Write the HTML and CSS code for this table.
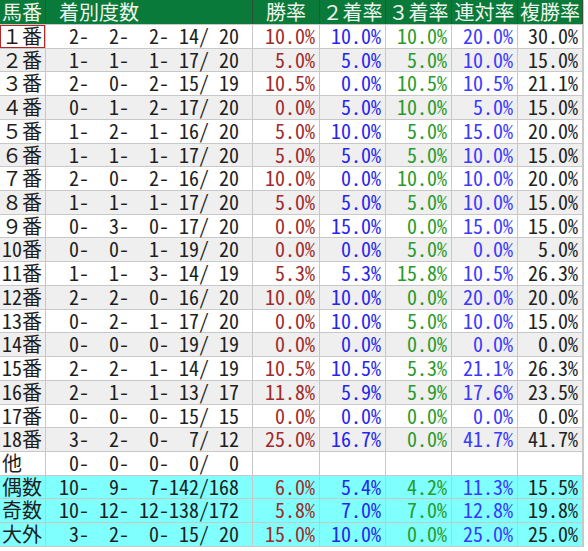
FILE: index.html
```html
<!DOCTYPE html>
<html lang="ja">
<head>
<meta charset="utf-8">
<title>馬番別成績</title>
<link rel="stylesheet" href="styles.css">
</head>
<body>
<div class="sheet">
  <div class="row head">
    <div class="cell lbl">馬番</div>
    <div class="cell cnt-h"> 着別度数</div>
    <div class="cell ctr">勝率</div>
    <div class="cell ctr">２着率</div>
    <div class="cell ctr">３着率</div>
    <div class="cell ctr">連対率</div>
    <div class="cell ctr">複勝率</div>
  </div>
  <div class="row"><div class="cell lbl sel">１番</div><div class="cell cnt">  2-  2-  2- 14/ 20</div><div class="cell pct win">10.0%</div><div class="cell pct p2">10.0%</div><div class="cell pct p3">10.0%</div><div class="cell pct ren">20.0%</div><div class="cell pct fuku">30.0%</div></div>
  <div class="row alt"><div class="cell lbl">２番</div><div class="cell cnt">  1-  1-  1- 17/ 20</div><div class="cell pct win">5.0%</div><div class="cell pct p2">5.0%</div><div class="cell pct p3">5.0%</div><div class="cell pct ren">10.0%</div><div class="cell pct fuku">15.0%</div></div>
  <div class="row"><div class="cell lbl">３番</div><div class="cell cnt">  2-  0-  2- 15/ 19</div><div class="cell pct win">10.5%</div><div class="cell pct p2">0.0%</div><div class="cell pct p3">10.5%</div><div class="cell pct ren">10.5%</div><div class="cell pct fuku">21.1%</div></div>
  <div class="row alt"><div class="cell lbl">４番</div><div class="cell cnt">  0-  1-  2- 17/ 20</div><div class="cell pct win">0.0%</div><div class="cell pct p2">5.0%</div><div class="cell pct p3">10.0%</div><div class="cell pct ren">5.0%</div><div class="cell pct fuku">15.0%</div></div>
  <div class="row"><div class="cell lbl">５番</div><div class="cell cnt">  1-  2-  1- 16/ 20</div><div class="cell pct win">5.0%</div><div class="cell pct p2">10.0%</div><div class="cell pct p3">5.0%</div><div class="cell pct ren">15.0%</div><div class="cell pct fuku">20.0%</div></div>
  <div class="row alt"><div class="cell lbl">６番</div><div class="cell cnt">  1-  1-  1- 17/ 20</div><div class="cell pct win">5.0%</div><div class="cell pct p2">5.0%</div><div class="cell pct p3">5.0%</div><div class="cell pct ren">10.0%</div><div class="cell pct fuku">15.0%</div></div>
  <div class="row"><div class="cell lbl">７番</div><div class="cell cnt">  2-  0-  2- 16/ 20</div><div class="cell pct win">10.0%</div><div class="cell pct p2">0.0%</div><div class="cell pct p3">10.0%</div><div class="cell pct ren">10.0%</div><div class="cell pct fuku">20.0%</div></div>
  <div class="row alt"><div class="cell lbl">８番</div><div class="cell cnt">  1-  1-  1- 17/ 20</div><div class="cell pct win">5.0%</div><div class="cell pct p2">5.0%</div><div class="cell pct p3">5.0%</div><div class="cell pct ren">10.0%</div><div class="cell pct fuku">15.0%</div></div>
  <div class="row"><div class="cell lbl">９番</div><div class="cell cnt">  0-  3-  0- 17/ 20</div><div class="cell pct win">0.0%</div><div class="cell pct p2">15.0%</div><div class="cell pct p3">0.0%</div><div class="cell pct ren">15.0%</div><div class="cell pct fuku">15.0%</div></div>
  <div class="row alt"><div class="cell lbl">10番</div><div class="cell cnt">  0-  0-  1- 19/ 20</div><div class="cell pct win">0.0%</div><div class="cell pct p2">0.0%</div><div class="cell pct p3">5.0%</div><div class="cell pct ren">0.0%</div><div class="cell pct fuku">5.0%</div></div>
  <div class="row"><div class="cell lbl">11番</div><div class="cell cnt">  1-  1-  3- 14/ 19</div><div class="cell pct win">5.3%</div><div class="cell pct p2">5.3%</div><div class="cell pct p3">15.8%</div><div class="cell pct ren">10.5%</div><div class="cell pct fuku">26.3%</div></div>
  <div class="row alt"><div class="cell lbl">12番</div><div class="cell cnt">  2-  2-  0- 16/ 20</div><div class="cell pct win">10.0%</div><div class="cell pct p2">10.0%</div><div class="cell pct p3">0.0%</div><div class="cell pct ren">20.0%</div><div class="cell pct fuku">20.0%</div></div>
  <div class="row"><div class="cell lbl">13番</div><div class="cell cnt">  0-  2-  1- 17/ 20</div><div class="cell pct win">0.0%</div><div class="cell pct p2">10.0%</div><div class="cell pct p3">5.0%</div><div class="cell pct ren">10.0%</div><div class="cell pct fuku">15.0%</div></div>
  <div class="row alt"><div class="cell lbl">14番</div><div class="cell cnt">  0-  0-  0- 19/ 19</div><div class="cell pct win">0.0%</div><div class="cell pct p2">0.0%</div><div class="cell pct p3">0.0%</div><div class="cell pct ren">0.0%</div><div class="cell pct fuku">0.0%</div></div>
  <div class="row"><div class="cell lbl">15番</div><div class="cell cnt">  2-  2-  1- 14/ 19</div><div class="cell pct win">10.5%</div><div class="cell pct p2">10.5%</div><div class="cell pct p3">5.3%</div><div class="cell pct ren">21.1%</div><div class="cell pct fuku">26.3%</div></div>
  <div class="row alt"><div class="cell lbl">16番</div><div class="cell cnt">  2-  1-  1- 13/ 17</div><div class="cell pct win">11.8%</div><div class="cell pct p2">5.9%</div><div class="cell pct p3">5.9%</div><div class="cell pct ren">17.6%</div><div class="cell pct fuku">23.5%</div></div>
  <div class="row"><div class="cell lbl">17番</div><div class="cell cnt">  0-  0-  0- 15/ 15</div><div class="cell pct win">0.0%</div><div class="cell pct p2">0.0%</div><div class="cell pct p3">0.0%</div><div class="cell pct ren">0.0%</div><div class="cell pct fuku">0.0%</div></div>
  <div class="row alt"><div class="cell lbl">18番</div><div class="cell cnt">  3-  2-  0-  7/ 12</div><div class="cell pct win">25.0%</div><div class="cell pct p2">16.7%</div><div class="cell pct p3">0.0%</div><div class="cell pct ren">41.7%</div><div class="cell pct fuku">41.7%</div></div>
  <div class="row"><div class="cell lbl">他</div><div class="cell cnt">  0-  0-  0-  0/  0</div><div class="cell pct"></div><div class="cell pct"></div><div class="cell pct"></div><div class="cell pct"></div><div class="cell pct"></div></div>
  <div class="row sum"><div class="cell lbl">偶数</div><div class="cell cnt"> 10-  9-  7-142/168</div><div class="cell pct win">6.0%</div><div class="cell pct p2">5.4%</div><div class="cell pct p3">4.2%</div><div class="cell pct ren">11.3%</div><div class="cell pct fuku">15.5%</div></div>
  <div class="row sum"><div class="cell lbl">奇数</div><div class="cell cnt"> 10- 12- 12-138/172</div><div class="cell pct win">5.8%</div><div class="cell pct p2">7.0%</div><div class="cell pct p3">7.0%</div><div class="cell pct ren">12.8%</div><div class="cell pct fuku">19.8%</div></div>
  <div class="row sum"><div class="cell lbl">大外</div><div class="cell cnt">  3-  2-  0- 15/ 20</div><div class="cell pct win">15.0%</div><div class="cell pct p2">10.0%</div><div class="cell pct p3">0.0%</div><div class="cell pct ren">25.0%</div><div class="cell pct fuku">25.0%</div></div>
</div>
</body>
</html>
```

FILE: styles.css
```css
html, body {
  margin: 0;
  padding: 0;
  background: #ffffff;
}

.sheet {
  width: 584px;
  display: flex;
  flex-direction: column;
  gap: 1px;
  background: #c8c8c8;
  border-right: 1px solid #c8c8c8;
  border-bottom: 1px solid #c8c8c8;
  box-sizing: border-box;
  font-family: "Noto Sans Mono CJK JP", "Noto Sans CJK JP", monospace;
  font-size: 20px;
  color: #1e1e1e;
}

.row {
  display: grid;
  grid-template-columns: 45px 206px 66px 65px 65px 65px 64px;
  gap: 1px;
  height: 22.73px;
  background: #c8c8c8;
}

.row.head {
  height: 24px;
  background: #2f4f38;
}

.cell {
  background: #ffffff;
  white-space: pre;
  line-height: 22.73px;
  box-sizing: border-box;
}

.head .cell {
  background: #0a7a3a;
  color: #eef4ee;
  line-height: 24px;
}

.row.alt .cell {
  background: #efefef;
}

.row.sum .cell {
  background: #80ffff;
}

.lbl {
  padding-left: 2px;
}

.cnt, .cnt-h {
  padding-left: 3px;
}

.ctr {
  text-align: center;
}

.pct {
  text-align: right;
  padding-right: 4px;
}

.sel {
  box-shadow: inset 0 0 0 1px #b02828;
}

.win { color: #a02a2a; }
.p2 { color: #2626f0; }
.p3 { color: #2a9a2a; }
.ren { color: #3a3aff; }
.fuku { color: #222222; }
```
